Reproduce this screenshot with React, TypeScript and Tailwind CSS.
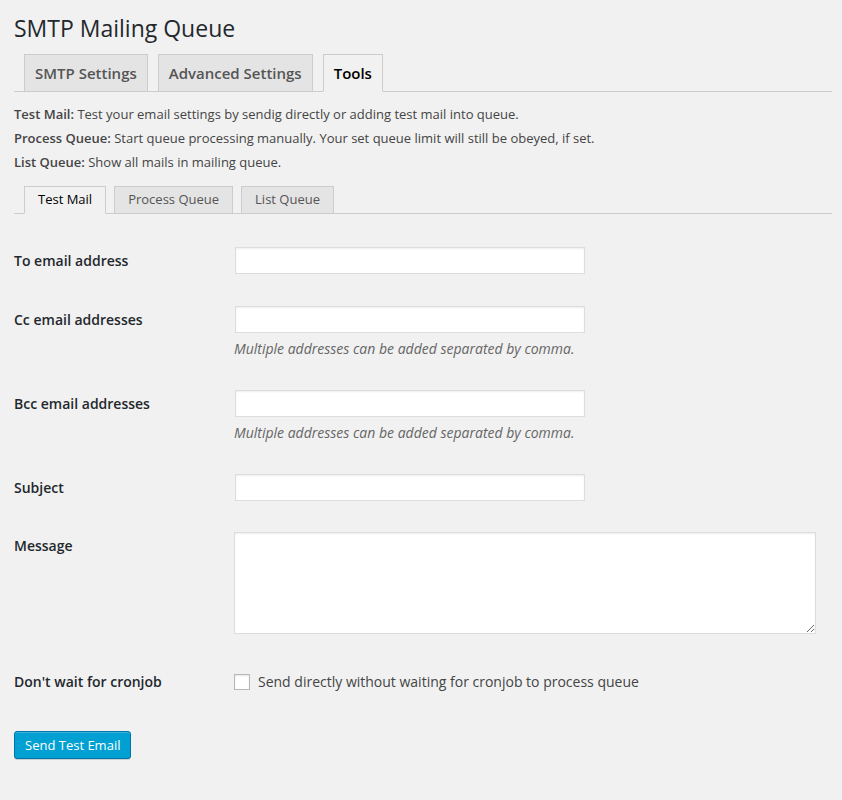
import React from "react";

const MAIN_TABS = [
  { title: "SMTP Settings", active: false },
  { title: "Advanced Settings", active: false },
  { title: "Tools", active: true },
];

const SUB_TABS = [
  { title: "Test Mail", active: true },
  { title: "Process Queue", active: false },
  { title: "List Queue", active: false },
];

const HELP = [
  { name: "Test Mail:", text: "Test your email settings by sendig directly or adding test mail into queue." },
  { name: "Process Queue:", text: "Start queue processing manually. Your set queue limit will still be obeyed, if set." },
  { name: "List Queue:", text: "Show all mails in mailing queue." },
];

const inputClass =
  "ml-px block h-[27px] w-[350px] border border-[#ddd] bg-white px-2 text-sm shadow-[inset_0_1px_2px_rgba(0,0,0,0.07)] outline-none";

const Label: React.FC<{ children: React.ReactNode }> = ({ children }) => (
  <div className="w-[220px] shrink-0 text-sm font-semibold leading-[27px] text-[#23282d]">{children}</div>
);

const Hint: React.FC = () => (
  <p className="mt-[4px] text-sm italic leading-[24px] text-[#666]">
    Multiple addresses can be added separated by comma.
  </p>
);

const App: React.FC = () => {
  return (
    <div className="min-h-[800px] bg-[#f1f1f1] pl-[14px] pr-[10px] font-['Open_Sans',sans-serif] text-[#444]">
      <h1 className="pt-[13px] text-[23px] font-normal leading-[30px] text-[#23282d]">SMTP Mailing Queue</h1>

      <nav className="mt-[11px] flex border-b border-[#ccc]">
        {MAIN_TABS.map((tab, index) => (
          <a
            key={index}
            href="#"
            className={
              tab.active
                ? "-mb-px ml-[10px] border border-[#ccc] border-b-[#f1f1f1] bg-[#f1f1f1] px-[10px] py-[6px] text-[15px] font-semibold leading-[24px] text-black"
                : "ml-[10px] border border-b-0 border-[#ccc] bg-[#e4e4e4] px-[10px] py-[6px] text-[15px] font-semibold leading-[24px] text-[#555]"
            }
          >
            {tab.title}
          </a>
        ))}
      </nav>

      <div className="mt-[10px] text-[13px] leading-[24px]">
        {HELP.map((item, index) => (
          <p key={index}>
            <strong className="font-semibold">{item.name}</strong> {item.text}
          </p>
        ))}
      </div>

      <div className="mt-[12px] flex border-b border-[#ccc]">
        {SUB_TABS.map((tab, index) => (
          <a
            key={index}
            href="#"
            className={
              (index === 0 ? "ml-[10px] " : "ml-[8px] ") +
              (tab.active
                ? "-mb-px border border-[#ccc] border-b-[#f1f1f1] bg-[#f1f1f1] px-[13px] pb-[5px] pt-[3px] text-[13px] leading-[18px] text-black"
                : "border border-b-0 border-[#ccc] bg-[#e4e4e4] px-[13px] pb-[5px] pt-[3px] text-[13px] leading-[18px] text-[#555]")
            }
          >
            {tab.title}
          </a>
        ))}
      </div>

      <form className="flex flex-col" onSubmit={(e) => e.preventDefault()}>
        <div className="mt-[33px] flex">
          <Label>To email address</Label>
          <input type="text" className={inputClass} />
        </div>

        <div className="mt-[32px] flex">
          <Label>Cc email addresses</Label>
          <div>
            <input type="text" className={inputClass} />
            <Hint />
          </div>
        </div>

        <div className="mt-[29px] flex">
          <Label>Bcc email addresses</Label>
          <div>
            <input type="text" className={inputClass} />
            <Hint />
          </div>
        </div>

        <div className="mt-[29px] flex">
          <Label>Subject</Label>
          <input type="text" className={inputClass} />
        </div>

        <div className="mt-[31px] flex">
          <Label>Message</Label>
          <textarea className="block h-[102px] w-[582px] border border-[#ddd] bg-white p-1 text-sm shadow-[inset_0_1px_2px_rgba(0,0,0,0.07)] outline-none" />
        </div>

        <div className="mt-[38px] flex items-center">
          <div className="w-[220px] shrink-0 text-sm font-semibold leading-[20px] text-[#23282d]">
            Don't wait for cronjob
          </div>
          <label className="flex items-center text-sm leading-[20px] text-[#444]">
            <input
              type="checkbox"
              className="mr-[8px] h-4 w-4 appearance-none border border-[#b4b9be] bg-white shadow-[inset_0_1px_2px_rgba(0,0,0,0.1)]"
            />
            Send directly without waiting for cronjob to process queue
          </label>
        </div>

        <div className="mt-[39px]">
          <button
            type="submit"
            className="h-[28px] rounded-[3px] border border-[#0073aa] bg-[#00a0d2] px-[10px] text-[13px] leading-[26px] text-white shadow-[inset_0_1px_0_rgba(120,200,230,0.5),0_1px_0_rgba(0,0,0,0.15)]"
          >
            Send Test Email
          </button>
        </div>
      </form>
    </div>
  );
};

export default App;
